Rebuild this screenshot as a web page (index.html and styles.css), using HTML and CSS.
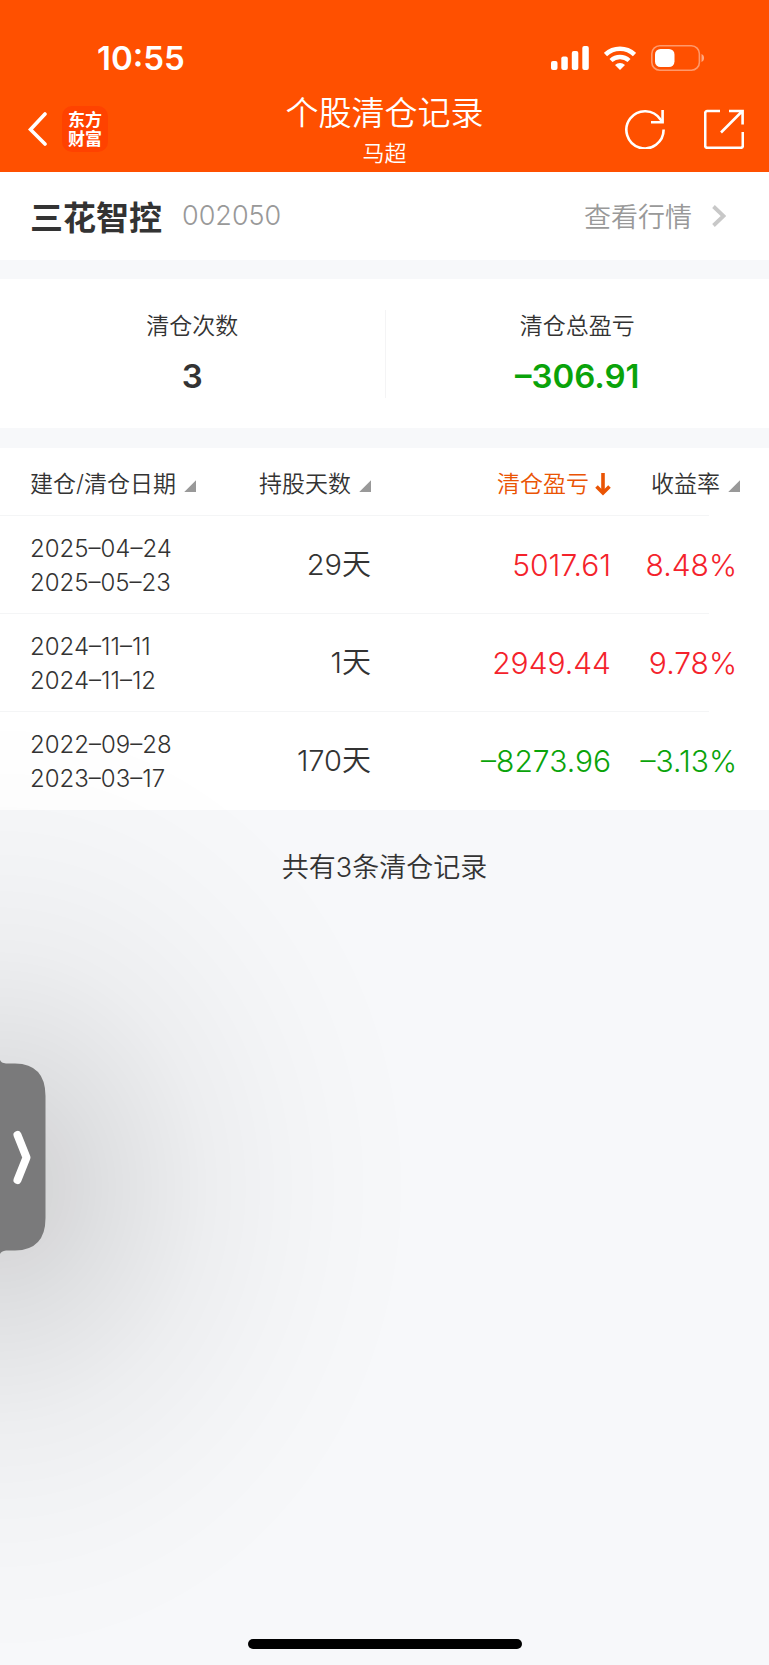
FILE: index.html
```html
<!DOCTYPE html>
<html lang="zh-CN">

<head>
    <meta charset="UTF-8">
    <meta name="viewport" content="width=device-width, initial-scale=1.0">
    <title>个股清仓记录</title>
    <link rel="stylesheet" href="styles.css">
</head>

<body>
    <header class="header">
        <div class="status">
            <span class="time">10:55</span>
            <div class="status-icons">
                <svg width="38" height="24" viewBox="0 0 38 24" fill="#fff">
                    <rect x="0" y="15" width="6.5" height="9" rx="2" />
                    <rect x="10.3" y="10.5" width="6.5" height="13.5" rx="2" />
                    <rect x="20.8" y="5" width="6.5" height="19" rx="2" />
                    <rect x="31.3" y="0" width="6.5" height="24" rx="2" />
                </svg>
                <svg width="32" height="24" viewBox="0 0 32 24" fill="none" stroke="#fff">
                    <path d="M1.5 8.5a21 21 0 0 1 29 0" stroke-width="4.6" />
                    <path d="M7 14.5a13.2 13.2 0 0 1 18 0" stroke-width="4.4" />
                    <path d="M11 19a7.5 7.5 0 0 1 10 0l-5 5z" fill="#fff" stroke="none" />
                </svg>
                <svg width="54" height="26" viewBox="0 0 54 26">
                    <rect x="0.8" y="0.8" width="47.6" height="24.4" rx="8" fill="none" stroke="#fff" stroke-opacity="0.42" stroke-width="1.6" />
                    <rect x="4" y="4" width="19.5" height="18" rx="5.5" fill="#fff" />
                    <path d="M50.5 9c3.4 1.2 3.4 6.800 0 8z" fill="#fff" fill-opacity="0.5" />
                </svg>
            </div>
        </div>
        <nav class="nav">
            <div class="nav-side nav-left">
                <button class="icon-btn" type="button" aria-label="返回">
                    <svg width="19" height="34" viewBox="0 0 19 34" fill="none" stroke="#fff" stroke-width="3.6" stroke-linecap="round">
                        <path d="M17 2L2.500 17.500L17 32" />
                    </svg>
                </button>
                <a class="logo" href="#">东方<br>财富</a>
            </div>
            <div class="nav-title">
                <h1>个股清仓记录</h1>
                <p>马超</p>
            </div>
            <div class="nav-side nav-right">
                <button class="icon-btn" type="button" aria-label="刷新">
                    <svg width="40" height="40" viewBox="0 0 40 40" fill="none" stroke="#fff" stroke-width="2.6">
                        <path d="M38.600 20.500A18.600 18.600 0 1 1 35.500 10.500L37.500 13" />
                        <path d="M37.600 1V13.200H26" />
                    </svg>
                </button>
                <button class="icon-btn" type="button" aria-label="分享">
                    <svg width="40" height="40" viewBox="0 0 40 40" fill="none" stroke="#fff" stroke-width="2.6">
                        <path d="M16 2H3.200a2 2 0 0 0-2 2V36.800a2 2 0 0 0 2 2H36.800a2 2 0 0 0 2-2V23" />
                        <path d="M25 2H38.600V15.500M38.400 2L17 23.500" />
                    </svg>
                </button>
            </div>
        </nav>
    </header>

    <section class="stock">
        <h2>三花智控</h2>
        <span class="code">002050</span>
        <a class="quote" href="#">查看行情
            <svg width="14" height="22" viewBox="0 0 14 22" fill="none" stroke="#c8c8c8" stroke-width="3.8">
                <path d="M1.500 1.500L11.500 11L1.500 20.500" />
            </svg>
        </a>
    </section>

    <section class="summary">
        <div class="summary-item">
            <p class="label">清仓次数</p>
            <p class="value">3</p>
        </div>
        <div class="summary-item">
            <p class="label">清仓总盈亏</p>
            <p class="value down">–306.91</p>
        </div>
    </section>

    <table class="records">
        <thead>
            <tr>
                <th class="col-date"><button class="sort" type="button">建仓/清仓日期<i class="corner"></i></button></th>
                <th class="col-days"><button class="sort" type="button">持股天数<i class="corner"></i></button></th>
                <th class="col-profit"><button class="sort active" type="button">清仓盈亏<svg width="16" height="24" viewBox="0 0 16 24" fill="none" stroke="#ea5404" stroke-width="3.6">
                            <path d="M8 1V20" />
                            <path d="M1.500 14.500L8 21L14.500 14.500" />
                        </svg></button></th>
                <th class="col-rate"><button class="sort" type="button">收益率<i class="corner"></i></button></th>
            </tr>
        </thead>
        <tbody>
            <tr>
                <td class="date">2025–04–24<br>2025–05–23</td>
                <td class="days">29天</td>
                <td class="up">5017.61</td>
                <td class="up">8.48%</td>
            </tr>
            <tr>
                <td class="date">2024–11–11<br>2024–11–12</td>
                <td class="days">1天</td>
                <td class="up">2949.44</td>
                <td class="up">9.78%</td>
            </tr>
            <tr>
                <td class="date">2022–09–28<br>2023–03–17</td>
                <td class="days">170天</td>
                <td class="down">–8273.96</td>
                <td class="down">–3.13%</td>
            </tr>
        </tbody>
    </table>

    <p class="total">共有3条清仓记录</p>

    <div class="drawer-shadow"></div>
    <button class="drawer" type="button" aria-label="展开">
        <svg width="46" height="194" viewBox="0 0 46 194">
            <path d="M0 0Q1 3 6 3.500H15Q45.500 4 45.500 36V158Q45.500 190 15 190.500H6Q1 191 0 194Z" fill="#7a7a7b" />
            <path d="M17.500 75L26.500 97.500L17.500 120" fill="none" stroke="#fff" stroke-width="8" stroke-linecap="round" stroke-linejoin="round" />
        </svg>
    </button>
    <div class="home-bar"></div>
</body>

</html>
```
FILE: styles.css
```css
* {
    box-sizing: border-box;
    margin: 0;
    padding: 0;
}

body {
    font-family: Inter, "Noto Sans CJK SC", sans-serif;
    background-color: #f7f8fa;
    color: #333;
    min-height: 100vh;
}

button {
    font: inherit;
    color: inherit;
    background: none;
    border: none;
    cursor: pointer;
}

a {
    color: inherit;
    text-decoration: none;
}

svg {
    display: block;
    flex: none;
}

/* header */
.header {
    background-color: #ff5000;
    color: #fff;
}

.status {
    display: flex;
    justify-content: space-between;
    align-items: center;
    padding: 40px 64px 0 97px;
}

.time {
    font-size: 33px;
    line-height: 36px;
    font-weight: 600;
}

.status-icons {
    display: flex;
    align-items: center;
    gap: 15px;
}

.nav {
    display: grid;
    grid-template-columns: 1fr auto 1fr;
    align-items: center;
    padding: 15px 25px 1px;
}

.nav-side {
    display: flex;
    align-items: center;
    gap: 15px;
    padding-bottom: 4px;
}

.nav-left {
    padding-left: 3px;
}

.nav-right {
    justify-content: flex-end;
    gap: 39px;
}

.logo {
    width: 46px;
    height: 46px;
    padding-top: 5px;
    border-radius: 10px;
    background-color: #ff4200;
    text-align: center;
    font-size: 17px;
    line-height: 19px;
    font-weight: 700;
}

.nav-title {
    text-align: center;
}

.nav-title h1 {
    font-size: 33px;
    line-height: 44px;
    font-weight: 350;
}

.nav-title p {
    font-size: 22px;
    line-height: 36px;
    font-weight: 350;
}

/* stock name */
.stock {
    display: flex;
    align-items: center;
    height: 88px;
    padding: 0 43px 1px 30px;
    background-color: #fff;
}

.stock h2 {
    font-size: 33px;
    font-weight: 700;
}

.code {
    margin-left: 20px;
    font-size: 27px;
    font-weight: 350;
    color: #999;
}

.quote {
    display: flex;
    align-items: center;
    gap: 20px;
    margin-left: auto;
    font-size: 27px;
    font-weight: 350;
    color: #999;
}

/* summary */
.summary {
    display: grid;
    grid-template-columns: 1fr 1fr;
    margin: 19px 0 20px;
    padding: 31px 0 30px;
    background-color: #fff;
}

.summary-item {
    text-align: center;
}

.summary-item + .summary-item {
    border-left: 1px solid #f4f4f5;
}

.label {
    font-size: 23px;
    line-height: 32px;
    font-weight: 350;
}

.value {
    margin-top: 12px;
    font-size: 33px;
    line-height: 44px;
    font-weight: 600;
}

.up {
    color: #f4222b;
}

.down {
    color: #0aa30a;
}

/* records */
.records {
    width: 100%;
    table-layout: fixed;
    border-collapse: collapse;
    background-color: #fff;
}

.records tr {
    height: 98px;
    background: linear-gradient(#f4f5f6, #f4f5f6) left bottom / calc(100% - 60px) 1px no-repeat;
}

.records thead tr {
    height: 68px;
}

.records tbody tr:last-child {
    background: none;
}

.records th,
.records td {
    text-align: right;
    white-space: nowrap;
    font-size: 30px;
    line-height: 40px;
    font-weight: 350;
}

.records th {
    padding-bottom: 2px;
}

.records th:first-child,
.records td:first-child {
    padding-left: 30px;
    text-align: left;
}

.records th:last-child {
    padding-right: 29px;
}

.records td:last-child {
    padding-right: 32px;
}

.records .date {
    padding-top: 1px;
    font-size: 24px;
    line-height: 34px;
}

.records .days {
    font-size: 29px;
}

.col-days {
    width: 140px;
}

.col-profit {
    width: 240px;
}

.col-rate {
    width: 158px;
}

.sort {
    display: inline-flex;
    align-items: center;
    gap: 8px;
    font-size: 23px;
    line-height: 32px;
    vertical-align: middle;
}

.sort.active {
    gap: 6px;
    color: #ea5404;
}

.corner {
    width: 12px;
    height: 12px;
    margin-top: 5px;
    background-color: #999;
    clip-path: polygon(100% 0, 100% 100%, 0 100%);
}

.total {
    padding: 38px 0;
    text-align: center;
    font-size: 27px;
    line-height: 40px;
    font-weight: 350;
}

/* side drawer */
.drawer-shadow {
    position: fixed;
    left: 0;
    bottom: 0;
    width: 420px;
    height: 956px;
    background: radial-gradient(ellipse 420px 478px at 0 50%,
        rgba(0, 0, 0, 0.155) 0%,
        rgba(0, 0, 0, 0.13) 12%,
        rgba(0, 0, 0, 0.096) 25%,
        rgba(0, 0, 0, 0.065) 37%,
        rgba(0, 0, 0, 0.038) 50%,
        rgba(0, 0, 0, 0.018) 67%,
        rgba(0, 0, 0, 0.007) 82%,
        rgba(0, 0, 0, 0) 100%);
    pointer-events: none;
}

.drawer {
    position: fixed;
    left: 0;
    bottom: 411px;
}

.home-bar {
    position: fixed;
    left: 50%;
    bottom: 16px;
    width: 274px;
    height: 10px;
    margin-left: -137px;
    border-radius: 5px;
    background-color: #000;
}
```
